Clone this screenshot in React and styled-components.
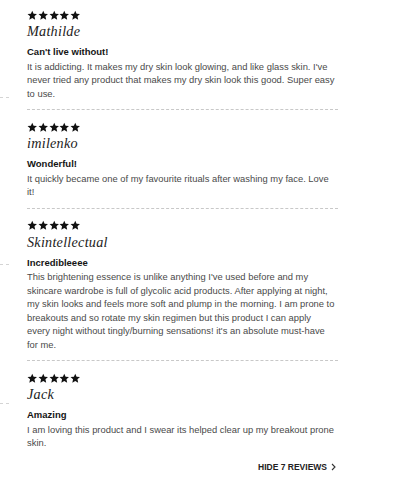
import React from 'react';
import styled, { createGlobalStyle } from 'styled-components';

const GlobalStyle = createGlobalStyle`
  html, body {
    margin: 0;
    padding: 0;
    background: #ffffff;
  }
  body {
    font-family: "Liberation Sans", Arial, sans-serif;
  }
`;

const Page = styled.div`
  display: flex;
  width: 400px;
  height: 483px;
  overflow: hidden;
  background: #fff;
`;

const Rail = styled.div`
  width: 9px;
  flex-shrink: 0;
  display: flex;
  flex-direction: column;
`;

const RailDash = styled.div`
  margin-top: ${(p) => p.top}px;
  height: 0;
  border-top: 1px dashed #d4d4d4;
`;

const List = styled.div`
  width: 311px;
  margin-left: 18px;
  padding-top: 9px;
`;

const Review = styled.div`
  padding-top: ${(p) => (p.first ? '0' : '11px')};
  padding-bottom: ${(p) => (p.last ? '0' : '9px')};
  border-bottom: ${(p) => (p.last ? 'none' : '1px dashed #c8c8c8')};
`;

const Stars = styled.div`
  display: flex;
  gap: 0.3px;
  height: 12px;
  align-items: center;
`;

const Name = styled.div`
  font-family: "Liberation Serif", "Times New Roman", serif;
  font-style: italic;
  font-size: 14.2px;
  line-height: 17px;
  color: #222;
  letter-spacing: 0.25px;
  margin-top: 2px;
`;

const Title = styled.div`
  font-weight: bold;
  font-size: 9.5px;
  line-height: 12px;
  color: #151515;
  margin-top: 6px;
`;

const Body = styled.p`
  margin: 1.5px 0 0;
  padding-right: 1.5px;
  font-size: 9.4px;
  line-height: 13.5px;
  color: #4a4a4a;
`;

const Footer = styled.div`
  display: flex;
  justify-content: flex-end;
  padding-top: 12px;
  padding-right: 2px;
`;

const HideLink = styled.a`
  display: flex;
  align-items: center;
  gap: 4px;
  font-weight: bold;
  font-size: 8.5px;
  line-height: 10px;
  color: #222;
  text-transform: uppercase;
  text-decoration: none;
  cursor: pointer;
`;

const Star = () => (
  <svg width="10.5" height="10.5" viewBox="0 0 24 24">
    <path
      d="M12 1.5l3.1 7.1 7.7.7-5.8 5.1 1.7 7.6L12 18l-6.7 4 1.7-7.6L1.2 9.3l7.7-.7z"
      fill="#111"
    />
  </svg>
);

const Chevron = () => (
  <svg width="5" height="8" viewBox="0 0 5 8">
    <path d="M1 1l3 3-3 3" fill="none" stroke="#333" strokeWidth="1.1" />
  </svg>
);

const reviews = [
  {
    name: 'Mathilde',
    title: "Can't live without!",
    body: "It is addicting. It makes my dry skin look glowing, and like glass skin. I've never tried any product that makes my dry skin look this good. Super easy to use.",
  },
  {
    name: 'imilenko',
    title: 'Wonderful!',
    body: 'It quickly became one of my favourite rituals after washing my face. Love it!',
  },
  {
    name: 'Skintellectual',
    title: 'Incredibleeee',
    body: "This brightening essence is unlike anything I've used before and my skincare wardrobe is full of glycolic acid products. After applying at night, my skin looks and feels more soft and plump in the morning. I am prone to breakouts and so rotate my skin regimen but this product I can apply every night without tingly/burning sensations! it's an absolute must-have for me.",
  },
  {
    name: 'Jack',
    title: 'Amazing',
    body: 'I am loving this product and I swear its helped clear up my breakout prone skin.',
  },
];

export default function App() {
  return (
    <Page>
      <GlobalStyle />
      <Rail>
        <RailDash top={97} />
        <RailDash top={166} />
        <RailDash top={138} />
      </Rail>
      <List>
        {reviews.map((r, i) => (
          <Review key={r.name} first={i === 0} last={i === reviews.length - 1}>
            <Stars>
              {[0, 1, 2, 3, 4].map((n) => (
                <Star key={n} />
              ))}
            </Stars>
            <Name>{r.name}</Name>
            <Title>{r.title}</Title>
            <Body>{r.body}</Body>
          </Review>
        ))}
        <Footer>
          <HideLink>
            Hide 7 reviews <Chevron />
          </HideLink>
        </Footer>
      </List>
    </Page>
  );
}
